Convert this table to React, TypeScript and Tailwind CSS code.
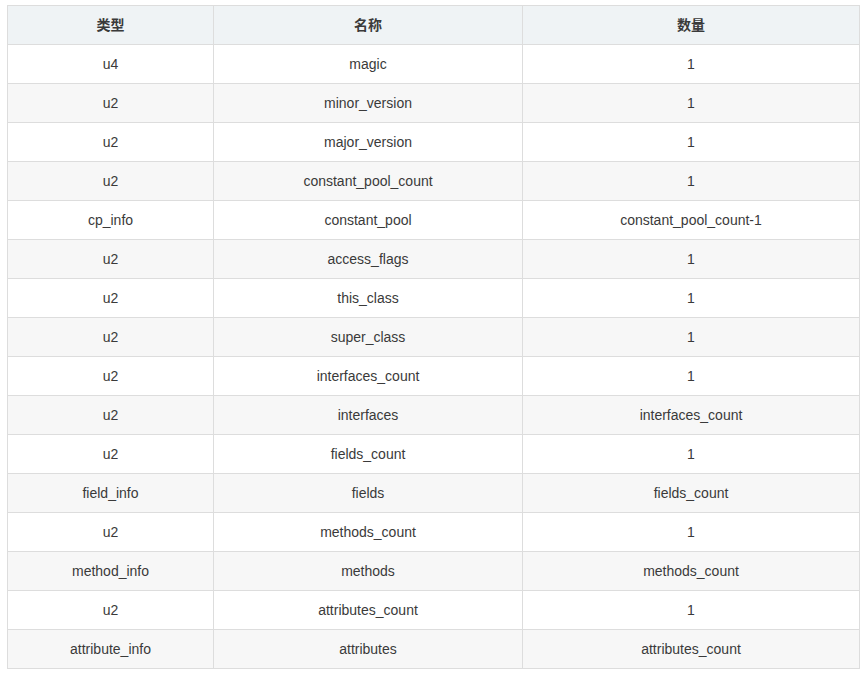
import React from "react";

const rows: [string, string, string][] = [
  ["u4", "magic", "1"],
  ["u2", "minor_version", "1"],
  ["u2", "major_version", "1"],
  ["u2", "constant_pool_count", "1"],
  ["cp_info", "constant_pool", "constant_pool_count-1"],
  ["u2", "access_flags", "1"],
  ["u2", "this_class", "1"],
  ["u2", "super_class", "1"],
  ["u2", "interfaces_count", "1"],
  ["u2", "interfaces", "interfaces_count"],
  ["u2", "fields_count", "1"],
  ["field_info", "fields", "fields_count"],
  ["u2", "methods_count", "1"],
  ["method_info", "methods", "methods_count"],
  ["u2", "attributes_count", "1"],
  ["attribute_info", "attributes", "attributes_count"],
];

export default function App() {
  return (
    <div
      className="bg-white min-h-[688px] pt-[5px] pl-[7px]"
      style={{ fontFamily: '"Liberation Sans", Arial, "Noto Sans CJK SC", sans-serif' }}
    >
      <table className="border-collapse w-[852px] text-[14px] text-[#3a3a3a] table-fixed">
        <colgroup>
          <col className="w-[206px]" />
          <col className="w-[309px]" />
          <col className="w-[337px]" />
        </colgroup>
        <thead>
          <tr className="h-[39px] bg-[#eff3f5]">
            <th className="border border-[#dddddd] font-bold text-center p-0">类型</th>
            <th className="border border-[#dddddd] font-bold text-center p-0">名称</th>
            <th className="border border-[#dddddd] font-bold text-center p-0">数量</th>
          </tr>
        </thead>
        <tbody>
          {rows.map((r, i) => (
            <tr key={i} className={i % 2 === 1 ? "h-[39px] bg-[#f7f7f7]" : "h-[39px] bg-white"}>
              <td className="border border-[#dddddd] text-center p-0">{r[0]}</td>
              <td className="border border-[#dddddd] text-center p-0">{r[1]}</td>
              <td className="border border-[#dddddd] text-center p-0">{r[2]}</td>
            </tr>
          ))}
        </tbody>
      </table>
    </div>
  );
}
